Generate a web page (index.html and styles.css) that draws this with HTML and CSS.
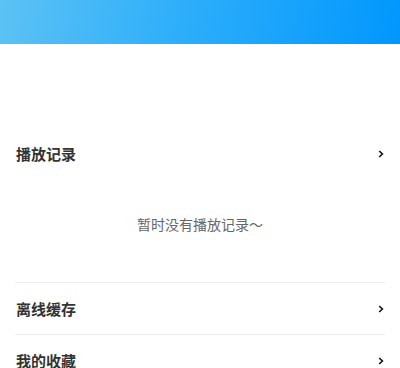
FILE: index.html
```html
<!DOCTYPE html>
<html lang="zh-CN">
<head>
<meta charset="UTF-8" />
<meta name="viewport" content="width=device-width, initial-scale=1" />
<title>我的</title>
<link rel="stylesheet" href="styles.css">
</head>
<body>

  <div class="header"></div>

  <div class="content">
    <div class="row">
      <span class="row-title">播放记录</span>
      <svg class="arrow" viewBox="0 0 6 8" width="6" height="8"><path d="M1.2 1 L4.4 4 L1.2 7" fill="none" stroke="#111" stroke-width="1.6" /></svg>
    </div>
    <div class="empty">暂时没有播放记录～</div>

    <div class="row bordered">
      <span class="row-title">离线缓存</span>
      <svg class="arrow" viewBox="0 0 6 8" width="6" height="8"><path d="M1.2 1 L4.4 4 L1.2 7" fill="none" stroke="#111" stroke-width="1.6" /></svg>
    </div>
    <div class="row bordered">
      <span class="row-title">我的收藏</span>
      <svg class="arrow" viewBox="0 0 6 8" width="6" height="8"><path d="M1.2 1 L4.4 4 L1.2 7" fill="none" stroke="#111" stroke-width="1.6" /></svg>
    </div>
  </div>

</body>
</html>
```

FILE: styles.css
```css
body {
  margin: 0;
  font-family: "Noto Sans CJK SC", "Noto Sans", sans-serif;
  background: #fff;
  color: #333;
}
.header {
  height: 44px;
  background: linear-gradient(100deg, #5dc2f4 0%, #2eaefa 45%, #0197fd 100%);
}
.content {
  padding: 84px 15px 0;
}
.row {
  display: flex;
  align-items: center;
  justify-content: space-between;
  height: 51px;
}
.row.bordered {
  border-top: 1px solid #eee;
}
.row-title {
  font-size: 15px;
  font-weight: 700;
  color: #333;
  padding-left: 1px;
}
.arrow {
  margin-right: 1px;
}
.empty {
  height: 103px;
  box-sizing: border-box;
  padding-top: 35px;
  text-align: center;
  font-size: 14px;
  color: #666;
}
```
